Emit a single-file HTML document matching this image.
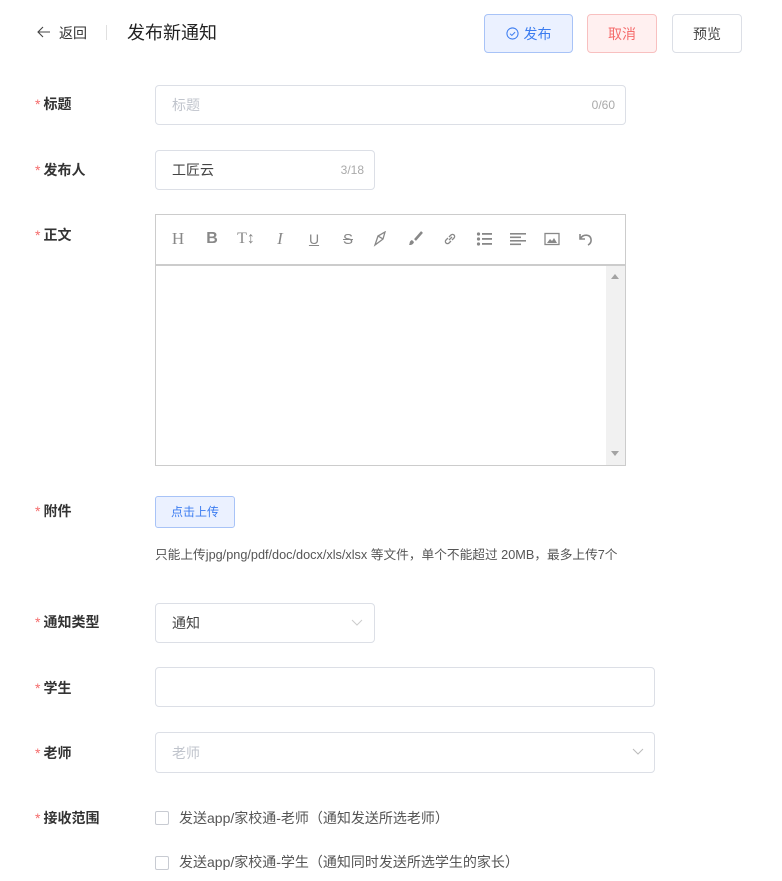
<!DOCTYPE html>
<html><head><meta charset="utf-8"><style>
*{margin:0;padding:0;box-sizing:border-box}
body{width:782px;height:881px;background:#fff;font-family:"Liberation Sans","Noto Sans CJK SC",sans-serif;color:#333;position:relative;overflow:hidden}
.a{position:absolute}
.lbl{position:absolute;left:35px;font-size:14px;font-weight:bold;color:#333;line-height:20px}
.lbl b{color:#f56c6c;font-weight:normal;margin-right:3px}
.box{position:absolute;border:1px solid #dcdfe6;border-radius:4px;background:#fff}
.btn{position:absolute;top:14px;height:39px;border-radius:4px;font-size:14px;display:flex;align-items:center;justify-content:center}
.ph{color:#c0c4cc}
.cnt{position:absolute;right:10px;top:0;line-height:38px;font-size:12px;color:#aaa}
.tb{position:absolute;top:229px;width:20px;height:20px;display:flex;align-items:center;justify-content:center;color:#888;font-size:16px}
.cb{position:absolute;left:155px;width:14px;height:14px;border:1px solid #c8cbd2;border-radius:2px}
.ct{position:absolute;left:179px;font-size:14px;color:#555;line-height:20px}
</style></head><body>
<svg class="a" style="left:36px;top:25px" width="16" height="14" viewBox="0 0 16 14"><path d="M14 7H2M7 2L2 7l5 5" fill="none" stroke="#444" stroke-width="1.1"/></svg>
<div class="a" style="left:59px;top:23px;font-size:14px;line-height:20px;color:#333">返回</div>
<div class="a" style="left:106px;top:25px;width:1px;height:15px;background:#e0e0e0"></div>
<div class="a" style="left:127px;top:20px;font-size:18px;line-height:26px;color:#222">发布新通知</div>
<div class="btn" style="left:484px;width:89px;background:#ebf1ff;border:1px solid #a8c3f7;color:#3b7cf0"><svg width="13" height="13" viewBox="0 0 14 14" style="margin-right:5px"><circle cx="7" cy="7" r="6" fill="none" stroke="#3b7cf0" stroke-width="1.1"/><path d="M4.3 7.2l2 1.9 3.5-3.6" fill="none" stroke="#3b7cf0" stroke-width="1.1"/></svg>发布</div>
<div class="btn" style="left:587px;width:70px;background:#fff0f0;border:1px solid #f8c0c0;color:#f56c6c">取消</div>
<div class="btn" style="left:672px;width:70px;background:#fff;border:1px solid #dcdfe6;color:#444">预览</div>

<div class="lbl" style="top:94px"><b>*</b>标题</div>
<div class="box" style="left:155px;top:85px;width:471px;height:40px"><span class="a ph" style="left:16px;top:9px;font-size:14px">标题</span><span class="cnt">0/60</span></div>

<div class="lbl" style="top:160px"><b>*</b>发布人</div>
<div class="box" style="left:155px;top:150px;width:220px;height:40px"><span class="a" style="left:16px;top:9px;font-size:14px;color:#444">工匠云</span><span class="cnt">3/18</span></div>

<div class="lbl" style="top:225px"><b>*</b>正文</div>
<div class="a" style="left:155px;top:214px;width:471px;height:252px;border:1px solid #ccc"></div>
<div class="a" style="left:156px;top:264px;width:469px;height:2px;background:#ccc"></div>
<div class="a" style="left:606px;top:266px;width:19px;height:199px;background:#f1f1f1"></div>
<div class="a" style="left:611px;top:274px;width:0;height:0;border-left:4px solid transparent;border-right:4px solid transparent;border-bottom:5px solid #a3a3a3"></div>
<div class="a" style="left:611px;top:451px;width:0;height:0;border-left:4px solid transparent;border-right:4px solid transparent;border-top:5px solid #a3a3a3"></div>
<div class="tb" style="left:168px;font-family:'Liberation Serif',serif;font-size:17px">H</div>
<div class="tb" style="left:202px;font-weight:bold">B</div>
<div class="tb" style="left:236px;font-family:'Liberation Serif',serif;font-size:16px">T↕</div>
<div class="tb" style="left:270px;font-family:'Liberation Serif',serif;font-style:italic;font-size:17px">I</div>
<div class="tb" style="left:304px;text-decoration:underline;font-size:14px">U</div>
<div class="tb" style="left:338px;text-decoration:line-through;font-size:15px">S</div>
<svg class="a" style="left:373px;top:231px" width="16" height="16" viewBox="0 0 16 16"><path d="M2 14l3-9 7-4-2 7-8 6zM5 5l5 3" fill="none" stroke="#888" stroke-width="1.3"/></svg>
<svg class="a" style="left:407px;top:231px" width="16" height="16" viewBox="0 0 16 16"><path d="M15 1L8 9" stroke="#888" stroke-width="2.5"/><path d="M2 14c1-1 0-4 3-5l2 2c-1 3-3 3-5 3z" fill="#888"/></svg>
<svg class="a" style="left:442px;top:231px" width="16" height="16" viewBox="0 0 16 16"><path d="M7 9l3-3M6 7L4 9a2 2 0 003 3l2-2M10 9l2-2a2 2 0 00-3-3L7 6" fill="none" stroke="#888" stroke-width="1.3"/></svg>
<svg class="a" style="left:476px;top:231px" width="16" height="16" viewBox="0 0 16 16"><g fill="#888"><circle cx="2.5" cy="3" r="1.6"/><circle cx="2.5" cy="8" r="1.6"/><circle cx="2.5" cy="13" r="1.6"/><rect x="6" y="2" width="10" height="1.8"/><rect x="6" y="7" width="10" height="1.8"/><rect x="6" y="12" width="10" height="1.8"/></g></svg>
<svg class="a" style="left:510px;top:231px" width="16" height="16" viewBox="0 0 16 16"><g fill="#888"><rect x="0" y="2" width="16" height="1.6"/><rect x="0" y="5.5" width="11" height="1.6"/><rect x="0" y="9" width="16" height="1.6"/><rect x="0" y="12.5" width="11" height="1.6"/></g></svg>
<svg class="a" style="left:544px;top:231px" width="16" height="16" viewBox="0 0 16 16"><rect x="1" y="2.5" width="14" height="11" fill="none" stroke="#888" stroke-width="1.3"/><path d="M3 12l3-4 2 2 2-3 3 5z" fill="#888"/></svg>
<svg class="a" style="left:578px;top:231px" width="16" height="16" viewBox="0 0 16 16"><path d="M2 3v5h5M2.5 7.5C5 3 12 3 13 8c.5 3-1 5-3 6" fill="none" stroke="#888" stroke-width="1.6"/></svg>

<div class="lbl" style="top:501px"><b>*</b>附件</div>
<div class="a" style="left:155px;top:496px;width:80px;height:32px;background:#ebf1ff;border:1px solid #a8c3f7;border-radius:3px;color:#3b7cf0;font-size:12px;text-align:center;line-height:30px">点击上传</div>
<div class="a" style="left:155px;top:547px;font-size:12.7px;color:#555;line-height:17px;white-space:nowrap">只能上传jpg/png/pdf/doc/docx/xls/xlsx 等文件，单个不能超过 20MB，最多上传7个</div>

<div class="lbl" style="top:612px"><b>*</b>通知类型</div>
<div class="box" style="left:155px;top:603px;width:220px;height:40px"><span class="a" style="left:16px;top:9px;font-size:14px;color:#444">通知</span><svg class="a" style="left:195px;top:15px" width="12" height="8" viewBox="0 0 12 8"><path d="M1 1l5 5 5-5" fill="none" stroke="#ccc" stroke-width="1"/></svg></div>

<div class="lbl" style="top:678px"><b>*</b>学生</div>
<div class="box" style="left:155px;top:667px;width:500px;height:40px"></div>

<div class="lbl" style="top:743px"><b>*</b>老师</div>
<div class="box" style="left:155px;top:732px;width:500px;height:41px"><span class="a ph" style="left:16px;top:10px;font-size:14px">老师</span><svg class="a" style="left:476px;top:15px" width="12" height="8" viewBox="0 0 12 8"><path d="M1 1l5 5 5-5" fill="none" stroke="#bbb" stroke-width="1"/></svg></div>

<div class="lbl" style="top:808px"><b>*</b>接收范围</div>
<div class="cb" style="top:811px"></div>
<div class="ct" style="top:808px">发送app/家校通-老师（通知发送所选老师）</div>
<div class="cb" style="top:856px"></div>
<div class="ct" style="top:852px">发送app/家校通-学生（通知同时发送所选学生的家长）</div>
</body></html>
